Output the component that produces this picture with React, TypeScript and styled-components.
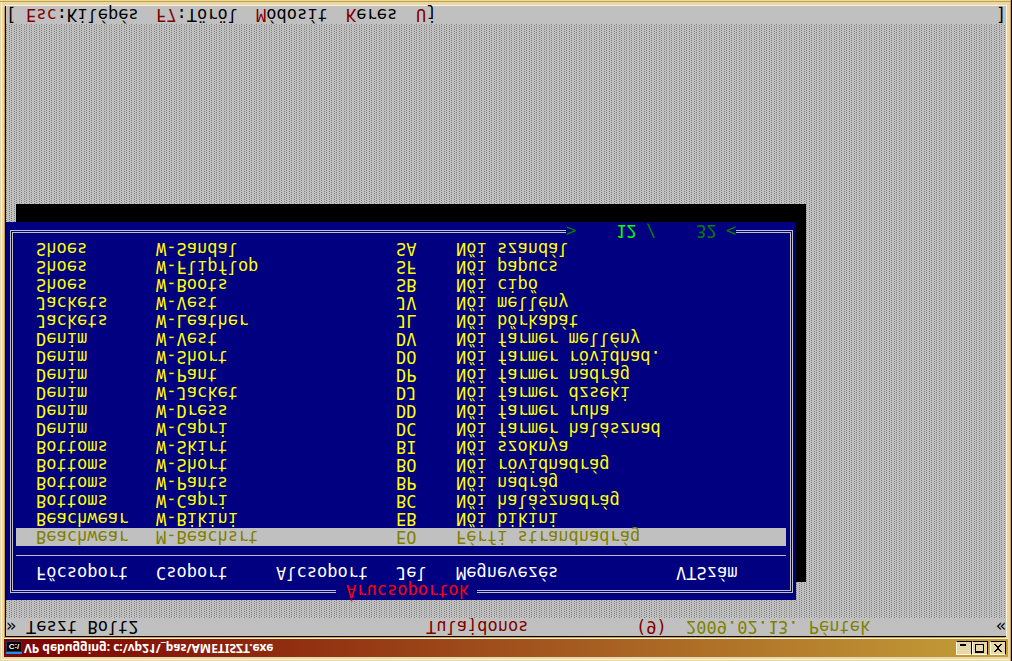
import React from 'react';
import styled, { createGlobalStyle } from 'styled-components';

const color = {
  frame: '#e8d8a8',
  frameLight: '#fbf2d4',
  gold: '#c8a23c',
  silver: '#c0c0c0',
  navy: '#000080',
  maroon: '#800000',
  olive: '#808000',
  green: '#008000',
  lime: '#00ff00',
  yellow: '#ffff00',
  red: '#ff0000',
};

const Global = createGlobalStyle`
  * { box-sizing: border-box; }
  body { margin: 0; background: ${color.frame}; }
  button { font: inherit; color: inherit; border: 0; padding: 0; background: none; text-align: left; }
`;

/* The whole window is shown upside down, as a mirrored console. */
const Frame = styled.div`
  display: flex;
  flex-direction: column;
  min-height: 100vh;
  min-width: 860px;
  padding: 4px 4px 6px;
  background: ${color.frame};
  box-shadow: inset -1px 0 #000, inset -2px 0 ${color.gold}, inset 0 -1px ${color.frame},
    inset 0 -2px ${color.gold}, inset 1px 1px ${color.frame}, inset 2px 2px ${color.frameLight};
  transform: scaleY(-1);
`;

const TitleBar = styled.header`
  display: flex;
  align-items: center;
  height: 18px;
  padding: 0 2px;
  background: linear-gradient(90deg, #7c0000, #c4a038);
  box-shadow: 0 1px ${color.frameLight};
`;

const AppIcon = styled.span`
  width: 16px;
  height: 13px;
  margin-right: 2px;
  border-top: 2px solid #2090f0;
  background: #000;
  box-shadow: inset 0 0 0 1px #203858;
  color: #fff;
  font: bold 8px/11px "Liberation Sans", Arial, sans-serif;
  text-align: center;
`;

const Title = styled.h1`
  flex: 1;
  margin: 0;
  color: #fff;
  font: bold 12px/18px "Noto Sans", "Trebuchet MS", sans-serif;
`;

const WindowButton = styled.button<{ $apart?: boolean }>`
  display: flex;
  width: 16px;
  height: 14px;
  margin-left: ${(p) => (p.$apart ? '2px' : '0')};
  border: 1px solid;
  border-color: #fffbe6 #000 #000 #fffbe6;
  background: ${color.frame};
`;

const Console = styled.main`
  flex: 1;
  display: flex;
  flex-direction: column;
  margin: 2px 2px 0 1px;
  border: solid #000;
  border-width: 1px 0 0 1px;
  box-shadow: -1px -1px ${color.gold}, 1px 1px ${color.frameLight};
  background: ${color.silver};
  color: #000;
  font: 17px/18px "DejaVu Sans Mono", monospace;
  white-space: pre;
`;

const StatusLine = styled.div`
  display: grid;
  grid-template-columns: 20px 400px 210px 50px 1fr 10px;
  height: 18px;
`;

const MenuLine = styled.nav`
  display: grid;
  grid-template-columns: 20px 130px 100px 90px 70px 1fr 10px;
  height: 18px;
`;

const Tint = styled.span<{ $color: string }>`
  color: ${(p) => p.$color};
`;

const Desktop = styled.div`
  flex: 1;
  padding: 18px 0;
  background-color: ${color.silver};
  background-image: conic-gradient(at 1px 1px, transparent 75%, #808080 75%),
    conic-gradient(at 1px 1px, transparent 75%, #808080 75%);
  background-size: 5px 2px;
  background-position: 0 1px, 3px 0;
`;

const Panel = styled.section`
  width: 79%;
  padding: 7px 3px 8px 4px;
  background: ${color.navy};
  box-shadow: 10px 18px #000;
`;

const DoubleFrame = styled.div`
  position: relative;
  padding: 8px 4px 7px 3px;
  border: 3px double ${color.silver};
`;

const PanelTitle = styled.h2`
  position: absolute;
  top: -10px;
  left: 323px;
  margin: 0;
  padding: 0 8px 0 10px;
  background: ${color.navy};
  color: ${color.red};
  font: inherit;
`;

const Counter = styled.div`
  position: absolute;
  right: 54px;
  bottom: -11px;
  display: grid;
  grid-template-columns: 50px 30px 50px 30px 10px;
  background: ${color.navy};
  color: ${color.green};
`;

const Table = styled.table`
  width: 100%;
  table-layout: fixed;
  border-spacing: 0;
  color: ${color.yellow};

  tbody::before {
    content: '';
    display: block;
    height: 9px;
  }
`;

const Head = styled.th<{ $width?: number }>`
  width: ${(p) => (p.$width ? `${p.$width}px` : 'auto')};
  height: 27px;
  padding: 0 0 8px;
  border-bottom: 1px solid ${color.silver};
  color: #fff;
  font-weight: normal;
  text-align: left;

  &:first-child { padding-left: 20px; }
`;

const Row = styled.tr<{ $selected: boolean }>`
  background: ${(p) => (p.$selected ? color.silver : 'transparent')};
  color: ${(p) => (p.$selected ? color.olive : color.yellow)};
`;

const Cell = styled.td`
  height: 18px;
  padding: 0;

  &:first-child { padding-left: 20px; }
`;

const columns: [string, number?][] = [
  ['Főcsoport', 140],
  ['Csoport', 120],
  ['Alcsoport', 120],
  ['Jel', 60],
  ['Megnevezés', 220],
  ['VTSzám'],
];

const groups = [
  ['Beachwear', 'M-Beachsrt', 'EO', 'Férfi strandnadrág'],
  ['Beachwear', 'W-Bikini', 'EB', 'Női bikini'],
  ['Bottoms', 'W-Capri', 'BC', 'Női halásznadrág'],
  ['Bottoms', 'W-Pants', 'BP', 'Női nadrág'],
  ['Bottoms', 'W-Short', 'BO', 'Női rövidnadrág'],
  ['Bottoms', 'W-Skirt', 'BI', 'Női szoknya'],
  ['Denim', 'W-Capri', 'DC', 'Női farmer halásznad'],
  ['Denim', 'W-Dress', 'DD', 'Női farmer ruha'],
  ['Denim', 'W-Jacket', 'DJ', 'Női farmer dzseki'],
  ['Denim', 'W-Pant', 'DP', 'Női farmer nadrág'],
  ['Denim', 'W-Short', 'DO', 'Női farmer rövidnad.'],
  ['Denim', 'W-Vest', 'DV', 'Női farmer mellény'],
  ['Jackets', 'W-Leather', 'JL', 'Női bőrkabát'],
  ['Jackets', 'W-Vest', 'JV', 'Női mellény'],
  ['Shoes', 'W-Boots', 'SB', 'Női cipő'],
  ['Shoes', 'W-Flipflop', 'SF', 'Női papucs'],
  ['Shoes', 'W-Sandal', 'SA', 'Női szandál'],
];

const menu = [
  ['Esc', ':Kilépés'],
  ['F7', ':Töröl'],
  ['M', 'ódosít'],
  ['K', 'eres'],
  ['U', 'j'],
];

export default function App() {
  return (
    <>
      <Global />
      <Frame>
        <TitleBar>
          <AppIcon aria-hidden="true">C:\</AppIcon>
          <Title>VP debugging: c:\vp21\_pas\AMETISZT.exe</Title>
          <WindowButton aria-label="Minimize">
            <svg width="14" height="12" shapeRendering="crispEdges">
              <path d="M3 8h6v2H3z" />
            </svg>
          </WindowButton>
          <WindowButton aria-label="Maximize">
            <svg width="14" height="12" shapeRendering="crispEdges">
              <path fillRule="evenodd" d="M2 1h9v9H2zM3 3v6h7V3z" />
            </svg>
          </WindowButton>
          <WindowButton aria-label="Close" $apart>
            <svg width="14" height="12" shapeRendering="crispEdges">
              <path d="M3 2h2v1h1v1h2V3h1V2h2v1h-1v1H9v1H8v2h1v1h1v1h1v1H9V9H8V8H6v1H5v1H3V9h1V8h1V7h1V5H5V4H4V3H3z" />
            </svg>
          </WindowButton>
        </TitleBar>
        <Console>
          <StatusLine>
            <span>»</span>
            <span>Teszt Bolt2</span>
            <Tint $color={color.maroon}>Tulajdonos</Tint>
            <Tint $color={color.maroon}>(9)</Tint>
            <Tint $color={color.olive}>2009.02.13. Péntek</Tint>
            <span>«</span>
          </StatusLine>
          <Desktop>
            <Panel>
              <DoubleFrame>
                <PanelTitle>Árucsoportok</PanelTitle>
                <Table>
                  <thead>
                    <tr>
                      {columns.map(([name, width]) => (
                        <Head key={name} $width={width}>{name}</Head>
                      ))}
                    </tr>
                  </thead>
                  <tbody>
                    {groups.map(([main, group, code, label], i) => (
                      <Row key={code} $selected={i === 0}>
                        <Cell>{main}</Cell>
                        <Cell>{group}</Cell>
                        <Cell />
                        <Cell>{code}</Cell>
                        <Cell>{label}</Cell>
                        <Cell />
                      </Row>
                    ))}
                  </tbody>
                </Table>
                <Counter>
                  <span>&gt;</span>
                  <Tint $color={color.lime}>12</Tint>
                  <span>/</span>
                  <span>32</span>
                  <span>&lt;</span>
                </Counter>
              </DoubleFrame>
            </Panel>
          </Desktop>
          <MenuLine>
            <span>[</span>
            {menu.map(([hot, rest]) => (
              <button key={hot}>
                <Tint $color={color.maroon}>{hot}</Tint>
                {rest}
              </button>
            ))}
            <span>]</span>
          </MenuLine>
        </Console>
      </Frame>
    </>
  );
}
